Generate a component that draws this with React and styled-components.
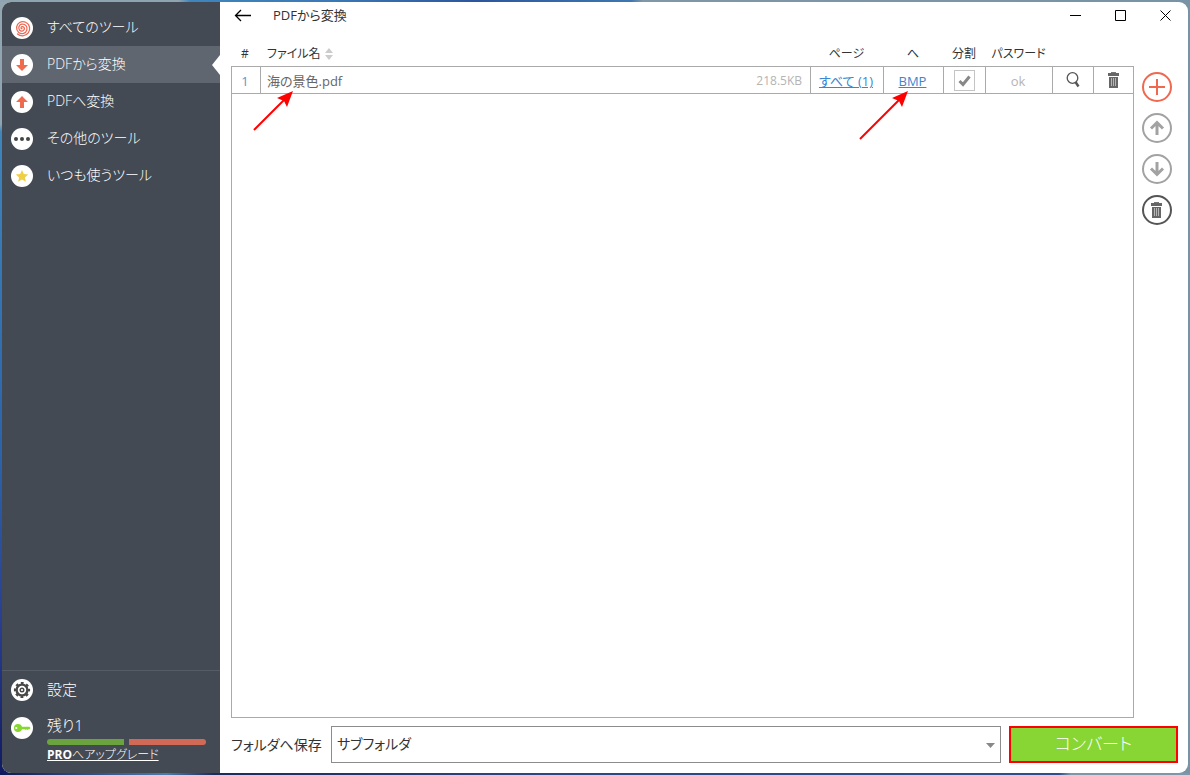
import styled, { createGlobalStyle } from 'styled-components';

const GlobalStyle = createGlobalStyle`
    *, *::before, *::after {
        box-sizing: border-box;
    }

    body {
        margin: 0;
        color: #333;
        font-family: "Open Sans", "Noto Sans CJK JP", sans-serif;
        font-feature-settings: "palt";
        font-size: 13px;
    }

    button, select, input {
        font: inherit;
        font-feature-settings: inherit;
        color: inherit;
        margin: 0;
    }
`;

const Desktop = styled.div`
    display: flex;
    min-height: 100vh;
    padding: 2px;
    background:
        linear-gradient(90deg, #8fa3b0 0%, #8fa3b0 15%, #3f86bd 16%, #3b78b6 28%, #2c56a0 40%, #3d77b0 53%, #7f97a6 54%, #7892a6 100%) top / 100% 2px no-repeat,
        linear-gradient(90deg, #101a52 0%, #4a7ab0 14%, #1d2a5c 18%, #2f4583 45%, #2d4f8f 89%, #7f97aa 90%) bottom / 100% 2px no-repeat,
        linear-gradient(180deg, #93a7b2 0%, #8fa5b2 16%, #3f86bd 17%, #2b62a8 60%, #2a3f90 80%, #101a60 100%) left / 50% 100% no-repeat,
        #7892a6;
`;

const Window = styled.div`
    flex: 1;
    display: flex;
    border-radius: 9px;
    overflow: hidden;
    background: #fff;
`;

const Sidebar = styled.nav`
    flex: 0 0 218px;
    display: flex;
    flex-direction: column;
    padding-top: 7px;
    background: #444a53;
    color: #fff;
    font-size: 14px;
    font-weight: 300;
`;

const NavItem = styled.button`
    display: flex;
    align-items: center;
    gap: 14px;
    width: 100%;
    height: 37px;
    padding: 0 0 0 9px;
    border: 0;
    background: ${props => props.$active ? "#5f666f" : "transparent"};
    color: #fff;
    text-align: left;
    cursor: pointer;
`;

const NavLabel = styled.span`
    flex: 1;
    padding-bottom: 2px;
    line-height: 20px;
`;

const ActiveMark = styled.svg`
    width: 8px;
    height: 20px;
`;

const RoundIcon = styled.svg`
    flex: none;
    width: 22px;
    height: 22px;
`;

const SidebarFooter = styled.div`
    margin-top: auto;
    border-top: 1px solid #565c65;
    padding-bottom: 8px;
    font-size: 15px;
`;

const License = styled.div`
    display: flex;
    align-items: flex-start;
    gap: 14px;
    padding: 7px 14px 0 9px;

    > svg {
        margin-top: 2px;
    }
`;

const LicenseInfo = styled.div`
    flex: 1;
    line-height: 20px;
`;

const Quota = styled.div`
    display: flex;
    gap: 5px;
    height: 6px;
    margin-top: 4px;
`;

const QuotaPart = styled.div`
    flex: 1;
    background: ${props => props.$used ? "#d06a57" : "#6ba43f"};
    border-radius: ${props => props.$used ? "0 3px 3px 0" : "3px 0 0 3px"};
`;

const UpgradeLink = styled.a`
    display: block;
    color: #fff;
    font-size: 12px;
    line-height: 20px;

    b {
        font-weight: 700;
    }
`;

const Main = styled.main`
    flex: 1;
    display: flex;
    flex-direction: column;
    min-width: 0;
    padding: 0 10px 10px 11px;
`;

const TitleBar = styled.header`
    display: flex;
    align-items: center;
    height: 27px;
    margin-bottom: 12px;
`;

const BarButton = styled.button`
    display: flex;
    align-items: center;
    justify-content: center;
    width: ${props => props.$width};
    height: 27px;
    padding: 0;
    border: 0;
    background: transparent;
    color: #000;
    cursor: pointer;
`;

const Title = styled.h1`
    flex: 1;
    margin: 0 0 0 18px;
    padding-bottom: 2px;
    font-size: 13px;
    font-weight: 400;
    line-height: 20px;
`;

const WindowButtons = styled.div`
    display: flex;
    margin-right: -10px;
`;

const Workspace = styled.div`
    flex: 1;
    display: flex;
    gap: 8px;
`;

const FileList = styled.section`
    flex: 1;
    display: flex;
    flex-direction: column;
`;

const Table = styled.table`
    width: 100%;
    table-layout: fixed;
    border-collapse: separate;
    border-spacing: 0;
`;

const HeadCell = styled.th`
    height: 25px;
    padding: ${props => props.$left ? "0 0 0 6px" : "0 2px 0 0"};
    font-size: 12px;
    font-weight: 400;
    line-height: 18px;
    text-align: ${props => props.$left ? "left" : "center"};
    white-space: nowrap;
`;

const SortIcon = styled.svg`
    margin-left: 4px;
    vertical-align: -2px;
`;

const Cell = styled.td`
    position: relative;
    height: 28px;
    padding: 0;
    border: 1px solid #aaa;
    border-left-width: ${props => props.$first ? "1px" : "0"};
    color: ${props => props.$color || "#666"};
    line-height: 20px;
    text-align: center;
    white-space: nowrap;

    a {
        color: #3c86cf;
    }
`;

const CellText = styled.div`
    display: flex;
    justify-content: ${props => props.$spread ? "space-between" : "center"};
    padding: ${props => props.$spread ? "2px 8px 0 6px" : "2px 2px 0 0"};
`;

const FileSize = styled.span`
    color: #b4b4b4;
    font-size: 12px;
`;

const Checkbox = styled.label`
    position: relative;
    display: block;
    width: 21px;
    height: 21px;
    margin: 0 auto;

    input {
        display: block;
        appearance: none;
        width: 21px;
        height: 21px;
        border: 1px solid #c4c4c4;
        background: #fff;
    }

    svg {
        position: absolute;
        inset: 0;
        display: none;
        pointer-events: none;
    }

    input:checked + svg {
        display: block;
    }
`;

const CellButton = styled.button`
    display: flex;
    align-items: center;
    justify-content: center;
    width: 100%;
    height: 24px;
    padding: 0;
    border: 0;
    background: transparent;
    cursor: pointer;
`;

const Pointer = styled.svg`
    position: absolute;
    z-index: 1;
    top: 23px;
    left: ${props => props.$left};
    pointer-events: none;
`;

const DropArea = styled.div`
    flex: 1;
    border: 1px solid #aaa;
    border-top: 0;
`;

const Actions = styled.div`
    display: flex;
    flex-direction: column;
    gap: 11px;
    margin-right: 6px;
    padding-top: 31px;
`;

const RoundButton = styled.button`
    display: flex;
    align-items: center;
    justify-content: center;
    width: 30px;
    height: 30px;
    padding: 0;
    border: 2px solid currentColor;
    border-radius: 50%;
    background: #fff;
    color: ${props => props.$color};
    cursor: pointer;
`;

const SaveBar = styled.footer`
    display: flex;
    align-items: center;
    gap: 8px;
    margin-top: 8px;
    font-size: 14px;
`;

const SaveLabel = styled.label`
    flex: 0 0 92px;
    padding-bottom: 2px;
    white-space: nowrap;
`;

const SelectBox = styled.div`
    position: relative;
    flex: 1;

    select {
        display: block;
        appearance: none;
        width: 100%;
        height: 37px;
        padding: 0 24px 2px 5px;
        border: 1px solid #8c8c8c;
        border-radius: 0;
        background: #fff;
    }

    svg {
        position: absolute;
        top: 17px;
        right: 6px;
        pointer-events: none;
    }
`;

const ConvertButton = styled.button`
    flex: 0 0 169px;
    height: 37px;
    padding: 0 0 4px;
    border: 2px solid #f00;
    background: #87d634;
    color: #fff;
    font-size: 17px;
    font-weight: 300;
    cursor: pointer;
`;

const Disc = ({children}) => (
    <RoundIcon viewBox="0 0 22 22" aria-hidden="true">
        <circle cx="11" cy="11" r="11" fill="#fff"/>
        {children}
    </RoundIcon>
);

const SpiralIcon = () => (
    <Disc>
        <path
            d="M11 11.600c-1.200.2-1.400-1.500-.1-1.900 1.800-.4 2.900 1.200 2.400 2.600-.7 2-3.400 2.400-4.800.7-1.700-2.300-.4-5.400 2.400-5.800 3.400-.5 5.800 2.600 5 5.700-.9 3.600-5.200 4.900-8.200 2.500-3.300-2.900-2.600-7.900.9-9.900 4-2.200 8.900.1 9.900 4.400 1 4.600-2.100 8.600-6.600 8.900-2.300.1-3.700-.4-5.400-1.900"
            fill="none" stroke="#ec6b56" strokeWidth="1.300" strokeLinecap="round"
        />
    </Disc>
);

const DownIcon = () => (
    <Disc><path d="M9 5h4v6h4l-6 6-6-6h4z" fill="#f06a50"/></Disc>
);

const UpIcon = () => (
    <Disc><path d="M9 17h4v-6h4l-6-6-6 6h4z" fill="#f06a50"/></Disc>
);

const DotsIcon = () => (
    <Disc>
        <g fill="#444">
            <circle cx="5" cy="11" r="2"/>
            <circle cx="11" cy="11" r="2"/>
            <circle cx="17" cy="11" r="2"/>
        </g>
    </Disc>
);

const StarIcon = () => (
    <Disc><path d="M11 5l1.800 4.100 4.400.4-3.300 2.900 1 4.400-3.900-2.300-3.900 2.300 1-4.400-3.300-2.900 4.400-.4z" fill="#efcf45"/></Disc>
);

const GearIcon = () => (
    <Disc>
        <g stroke="#484848" fill="none">
            <circle cx="11" cy="11" r="5.400" strokeWidth="2.400"/>
            <circle cx="11" cy="11" r="7" strokeWidth="2.200" strokeDasharray="2.749 2.749" strokeDashoffset="1.374"/>
            <circle cx="11" cy="11" r="1.800" strokeWidth="1.400"/>
        </g>
    </Disc>
);

const KeyIcon = () => (
    <Disc>
        <path d="M10 9.800h8.400l1.200 1.200-1.200 1.200h-1l-.8.8-.9-.8-.9.800-.9-.8H10z" fill="#86d82f"/>
        <circle cx="7" cy="11" r="4" fill="#86d82f"/>
        <circle cx="5.300" cy="11" r="1.100" fill="#fff"/>
    </Disc>
);

const TrashIcon = () => (
    <svg width="12" height="16" viewBox="0 0 12 16" aria-hidden="true">
        <path d="M3 .5h5" stroke="#777"/>
        <path d="M0 1h11v3H0z" fill="#666"/>
        <path d="M1 5h9v11H1z" fill="#666"/>
        <path d="M3.500 6v8M5.500 6v8M7.500 6v8" stroke="#b4b4b4"/>
    </svg>
);

const navItems = [
    {label: "すべてのツール", Icon: SpiralIcon},
    {label: "PDFから変換", Icon: DownIcon, active: true},
    {label: "PDFへ変換", Icon: UpIcon},
    {label: "その他のツール", Icon: DotsIcon},
    {label: "いつも使うツール", Icon: StarIcon},
];

const SideMenu = () => (
    <Sidebar>
        {navItems.map(({label, Icon, active}) => (
            <NavItem key={label} $active={active}>
                <Icon/>
                <NavLabel>{label}</NavLabel>
                {active && (
                    <ActiveMark viewBox="0 0 8 20" aria-hidden="true">
                        <path d="M8 0v20L0 10z" fill="#fff"/>
                    </ActiveMark>
                )}
            </NavItem>
        ))}
        <SidebarFooter>
            <NavItem>
                <GearIcon/>
                <NavLabel>設定</NavLabel>
            </NavItem>
            <License>
                <KeyIcon/>
                <LicenseInfo>
                    残り1
                    <Quota>
                        <QuotaPart/>
                        <QuotaPart $used/>
                    </Quota>
                    <UpgradeLink href="#upgrade"><b>PRO</b>へアップグレード</UpgradeLink>
                </LicenseInfo>
            </License>
        </SidebarFooter>
    </Sidebar>
);

const RedArrow = ({size, left}) => (
    <Pointer $left={left} width={size + 2} height={size + 2} viewBox={`0 0 ${size + 2} ${size + 2}`} aria-hidden="true">
        <path d={`M1 ${size + 1}L${size - 8} 10`} stroke="#f00" strokeWidth="2"/>
        <path d={`M${size + 1} 1l-6 16-3-6-7-3z`} fill="#f00"/>
    </Pointer>
);

const FileTable = () => (
    <FileList>
        <Table>
            <colgroup>
                <col style={{width: 30}}/>
                <col/>
                <col style={{width: 73}}/>
                <col style={{width: 60}}/>
                <col style={{width: 42}}/>
                <col style={{width: 67}}/>
                <col style={{width: 41}}/>
                <col style={{width: 40}}/>
            </colgroup>
            <thead>
                <tr>
                    <HeadCell>#</HeadCell>
                    <HeadCell $left>
                        ファイル名
                        <SortIcon width="8" height="12" viewBox="0 0 8 12" aria-hidden="true">
                            <path d="M4 0l4 5H0zM4 12l4-5H0z" fill="#ccc"/>
                        </SortIcon>
                    </HeadCell>
                    <HeadCell>ページ</HeadCell>
                    <HeadCell>へ</HeadCell>
                    <HeadCell>分割</HeadCell>
                    <HeadCell>パスワード</HeadCell>
                    <HeadCell/>
                    <HeadCell/>
                </tr>
            </thead>
            <tbody>
                <tr>
                    <Cell $first $color="#6c8fc4"><CellText>1</CellText></Cell>
                    <Cell>
                        <CellText $spread>
                            <span>海の景色.pdf</span>
                            <FileSize>218.5KB</FileSize>
                        </CellText>
                        <RedArrow size={39} left="-8px"/>
                    </Cell>
                    <Cell><CellText><a href="#pages">すべて (1)</a></CellText></Cell>
                    <Cell>
                        <CellText><a href="#format">BMP</a></CellText>
                        <RedArrow size={48} left="-25px"/>
                    </Cell>
                    <Cell>
                        <Checkbox>
                            <input type="checkbox" aria-label="分割" defaultChecked/>
                            <svg width="21" height="21" viewBox="0 0 21 21">
                                <path d="M5.500 11l3.500 3.500 6.500-8" fill="none" stroke="#888" strokeWidth="3"/>
                            </svg>
                        </Checkbox>
                    </Cell>
                    <Cell $color="#b4b4b4"><CellText>ok</CellText></Cell>
                    <Cell>
                        <CellButton aria-label="プレビュー">
                            <svg width="14" height="16" viewBox="0 0 14 16" fill="none" stroke="#555">
                                <circle cx="6.500" cy="6" r="5.300" strokeWidth="1.300"/>
                                <path d="M9.500 10l3 4.500" strokeWidth="2.400"/>
                            </svg>
                        </CellButton>
                    </Cell>
                    <Cell>
                        <CellButton aria-label="削除"><TrashIcon/></CellButton>
                    </Cell>
                </tr>
            </tbody>
        </Table>
        <DropArea/>
    </FileList>
);

const ActionButtons = () => (
    <Actions>
        <RoundButton $color="#f0684f" aria-label="追加">
            <svg width="16" height="16" viewBox="0 0 16 16">
                <path d="M8 0v16M0 8h16" stroke="currentColor" strokeWidth="2"/>
            </svg>
        </RoundButton>
        <RoundButton $color="#a2a2a2" aria-label="上へ">
            <svg width="16" height="16" viewBox="0 0 16 16" fill="none" stroke="currentColor" strokeWidth="3">
                <path d="M8 15V3M2 8.500l6-6 6 6"/>
            </svg>
        </RoundButton>
        <RoundButton $color="#a2a2a2" aria-label="下へ">
            <svg width="16" height="16" viewBox="0 0 16 16" fill="none" stroke="currentColor" strokeWidth="3">
                <path d="M8 1v12M2 7.500l6 6 6-6"/>
            </svg>
        </RoundButton>
        <RoundButton $color="#555" aria-label="すべて削除"><TrashIcon/></RoundButton>
    </Actions>
);

const App = () => (
    <Desktop>
        <GlobalStyle/>
        <Window>
            <SideMenu/>
            <Main>
                <TitleBar>
                    <BarButton $width="24px" aria-label="戻る">
                        <svg width="18" height="13" viewBox="0 0 18 13" fill="none" stroke="currentColor" strokeWidth="1.300">
                            <path d="M1.500 6.500h15.500M7 1L1.500 6.500 7 12"/>
                        </svg>
                    </BarButton>
                    <Title>PDFから変換</Title>
                    <WindowButtons>
                        <BarButton $width="45px" aria-label="最小化">
                            <svg width="11" height="11" viewBox="0 0 11 11"><path d="M0 5.500h11" stroke="currentColor"/></svg>
                        </BarButton>
                        <BarButton $width="45px" aria-label="最大化">
                            <svg width="11" height="11" viewBox="0 0 11 11"><path d="M.5.5h10v10H.5z" fill="none" stroke="currentColor"/></svg>
                        </BarButton>
                        <BarButton $width="45px" aria-label="閉じる">
                            <svg width="11" height="11" viewBox="0 0 11 11"><path d="M.5.5l10 10M10.500.5l-10 10" stroke="currentColor"/></svg>
                        </BarButton>
                    </WindowButtons>
                </TitleBar>
                <Workspace>
                    <FileTable/>
                    <ActionButtons/>
                </Workspace>
                <SaveBar>
                    <SaveLabel htmlFor="target">フォルダへ保存</SaveLabel>
                    <SelectBox>
                        <select id="target">
                            <option>サブフォルダ</option>
                        </select>
                        <svg width="9" height="5" viewBox="0 0 9 5"><path d="M0 0h9L4.500 5z" fill="#888"/></svg>
                    </SelectBox>
                    <ConvertButton>コンバート</ConvertButton>
                </SaveBar>
            </Main>
        </Window>
    </Desktop>
);

export default App;
